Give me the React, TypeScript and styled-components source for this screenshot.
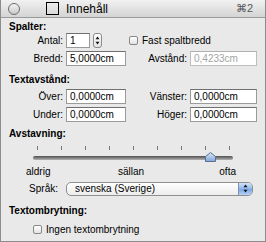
import styled, { createGlobalStyle } from "styled-components";

const Global = createGlobalStyle`
  html, body {
    margin: 0;
    padding: 0;
    background: #e9e9e9;
  }
`;

const Panel = styled.div`
  width: 266px;
  height: 242px;
  box-sizing: border-box;
  border: 1px solid #8c8c8c;
  border-top: none;
  background: #e9e9e9;
  font-family: "Liberation Sans", Arial, sans-serif;
  font-size: 10px;
  color: #000;
  display: flex;
  flex-direction: column;
`;

const TitleBar = styled.div`
  height: 17px;
  border-bottom: 1px solid #9a9a9a;
  background: linear-gradient(#f1f1f1, #d4d4d4);
  display: flex;
  align-items: center;
  padding: 0 12px 0 7px;
`;

const CloseDot = styled.div`
  width: 10px;
  height: 10px;
  border-radius: 50%;
  border: 1.5px solid #6d6d6d;
  background: linear-gradient(#f4f4f4, #c9c9c9);
`;

const Square = styled.div`
  width: 11px;
  height: 11px;
  border: 1px solid #000;
  margin-left: 26px;
`;

const Title = styled.div`
  font-size: 12px;
  margin-left: 7px;
`;

const Shortcut = styled.div`
  margin-left: auto;
  font-size: 11px;
  color: #555;
`;

const Body = styled.div`
  padding: 3px 8px 0 8px;
  display: flex;
  flex-direction: column;
`;

const SectionTitle = styled.div<{ $top?: number }>`
  font-weight: bold;
  line-height: 12px;
  height: 12px;
  margin-top: ${(p) => p.$top ?? 0}px;
`;

const Row = styled.div<{ $top?: number }>`
  display: flex;
  align-items: center;
  height: 15px;
  margin-top: ${(p) => p.$top ?? 3}px;
`;

const Label = styled.div<{ $w?: number; $gap?: number }>`
  width: ${(p) => p.$w ?? 54}px;
  margin-right: ${(p) => p.$gap ?? 3}px;
  text-align: right;
  white-space: nowrap;
`;

const Input = styled.div<{ $w: number; $disabled?: boolean }>`
  width: ${(p) => p.$w}px;
  height: 15px;
  box-sizing: border-box;
  border: 1px solid ${(p) => (p.$disabled ? "#bdbdbd" : "#9a9a9a")};
  border-top-color: ${(p) => (p.$disabled ? "#b0b0b0" : "#6f6f6f")};
  background: #fff;
  padding: 0 3px;
  line-height: 13px;
  color: ${(p) => (p.$disabled ? "#a3a3a3" : "#000")};
`;

const RightGroup = styled.div`
  margin-left: auto;
  display: flex;
  align-items: center;
`;

const Stepper = styled.div`
  margin-left: 3px;
  width: 9px;
  height: 15px;
  box-sizing: border-box;
  border: 1px solid #8a8a8a;
  border-radius: 3px;
  background: linear-gradient(#ffffff, #e4e4e4);
  display: flex;
  align-items: center;
  justify-content: center;
`;

const Check = styled.div<{ $left: number }>`
  margin-left: ${(p) => p.$left}px;
  width: 9px;
  height: 9px;
  box-sizing: border-box;
  border: 1px solid #888;
  border-radius: 2px;
  background: linear-gradient(#ffffff, #e2e2e2);
`;

const CheckText = styled.div`
  margin-left: 4px;
`;

const Ticks = styled.div`
  margin: 6px 0 0 28px;
  width: 193px;
  height: 4px;
  display: flex;
  justify-content: space-between;
`;

const Tick = styled.div`
  width: 1px;
  height: 4px;
  background: #7a7a7a;
`;

const Track = styled.div`
  position: relative;
  margin: 6px 0 0 24px;
  width: 200px;
  height: 4px;
  border-radius: 2px;
  background: linear-gradient(#4f4f4f, #8a8a8a 60%, #b4b4b4);
`;

const Knob = styled.svg`
  position: absolute;
  left: 172px;
  top: -4px;
`;

const SliderLabels = styled.div`
  margin: 6px 0 0 17px;
  width: 210px;
  display: grid;
  grid-template-columns: 1fr 1fr 1fr;
  line-height: 12px;
  span:nth-child(2) {
    text-align: center;
  }
  span:nth-child(3) {
    text-align: right;
  }
`;

const Popup = styled.div`
  width: 187px;
  height: 14px;
  box-sizing: border-box;
  border: 1px solid #8f8f8f;
  border-radius: 5px;
  background: linear-gradient(#ffffff, #ececec);
  display: flex;
  align-items: center;
  overflow: hidden;
`;

const PopupText = styled.div`
  flex: 1;
  padding-left: 8px;
  line-height: 12px;
`;

const PopupArrows = styled.div`
  width: 13px;
  height: 100%;
  border-left: 1px solid #7d8fb0;
  background: linear-gradient(#d3e3f8, #8db5ea 50%, #7aa7e4 55%, #b9d3f5);
  display: flex;
  align-items: center;
  justify-content: center;
`;

const Arrows = () => (
  <svg width="5" height="9" viewBox="0 0 5 9">
    <path d="M2.5 0.5 L4.5 3.3 L0.5 3.3 Z" fill="#111" />
    <path d="M2.5 8.5 L4.5 5.7 L0.5 5.7 Z" fill="#111" />
  </svg>
);

export default function App() {
  return (
    <>
      <Global />
      <Panel>
        <TitleBar>
          <CloseDot />
          <Square />
          <Title>Innehåll</Title>
          <Shortcut>⌘2</Shortcut>
        </TitleBar>
        <Body>
          <SectionTitle>Spalter:</SectionTitle>
          <Row $top={0}>
            <Label>Antal:</Label>
            <Input $w={24}>1</Input>
            <Stepper>
              <Arrows />
            </Stepper>
            <Check $left={27} />
            <CheckText>Fast spaltbredd</CheckText>
          </Row>
          <Row>
            <Label>Bredd:</Label>
            <Input $w={60}>5,0000cm</Input>
            <RightGroup>
              <Label $w={40}>Avstånd:</Label>
              <Input $w={67} $disabled>
                0,4233cm
              </Input>
            </RightGroup>
          </Row>

          <SectionTitle $top={8}>Textavstånd:</SectionTitle>
          <Row>
            <Label>Över:</Label>
            <Input $w={60}>0,0000cm</Input>
            <RightGroup>
              <Label $w={40}>Vänster:</Label>
              <Input $w={67}>0,0000cm</Input>
            </RightGroup>
          </Row>
          <Row>
            <Label>Under:</Label>
            <Input $w={60}>0,0000cm</Input>
            <RightGroup>
              <Label $w={40}>Höger:</Label>
              <Input $w={67}>0,0000cm</Input>
            </RightGroup>
          </Row>

          <SectionTitle $top={6}>Avstavning:</SectionTitle>
          <Ticks>
            {Array.from({ length: 9 }).map((_, i) => (
              <Tick key={i} />
            ))}
          </Ticks>
          <Track>
            <Knob width="11" height="10" viewBox="0 0 11 10">
              <defs>
                <linearGradient id="kg" x1="0" y1="0" x2="0" y2="1">
                  <stop offset="0" stopColor="#dbe7f7" />
                  <stop offset="1" stopColor="#7fa6dc" />
                </linearGradient>
              </defs>
              <path
                d="M5.5 0.5 L10.5 4.5 L10.5 9.5 L0.5 9.5 L0.5 4.5 Z"
                fill="url(#kg)"
                stroke="#5d6f8e"
                strokeLinejoin="round"
              />
            </Knob>
          </Track>
          <SliderLabels>
            <span>aldrig</span>
            <span>sällan</span>
            <span>ofta</span>
          </SliderLabels>
          <Row $top={3}>
            <Label $w={49} $gap={8}>
              Språk:
            </Label>
            <Popup>
              <PopupText>svenska (Sverige)</PopupText>
              <PopupArrows>
                <Arrows />
              </PopupArrows>
            </Popup>
          </Row>

          <SectionTitle $top={9}>Textombrytning:</SectionTitle>
          <Row $top={5}>
            <Check $left={24} />
            <CheckText>Ingen textombrytning</CheckText>
          </Row>
        </Body>
      </Panel>
    </>
  );
}
